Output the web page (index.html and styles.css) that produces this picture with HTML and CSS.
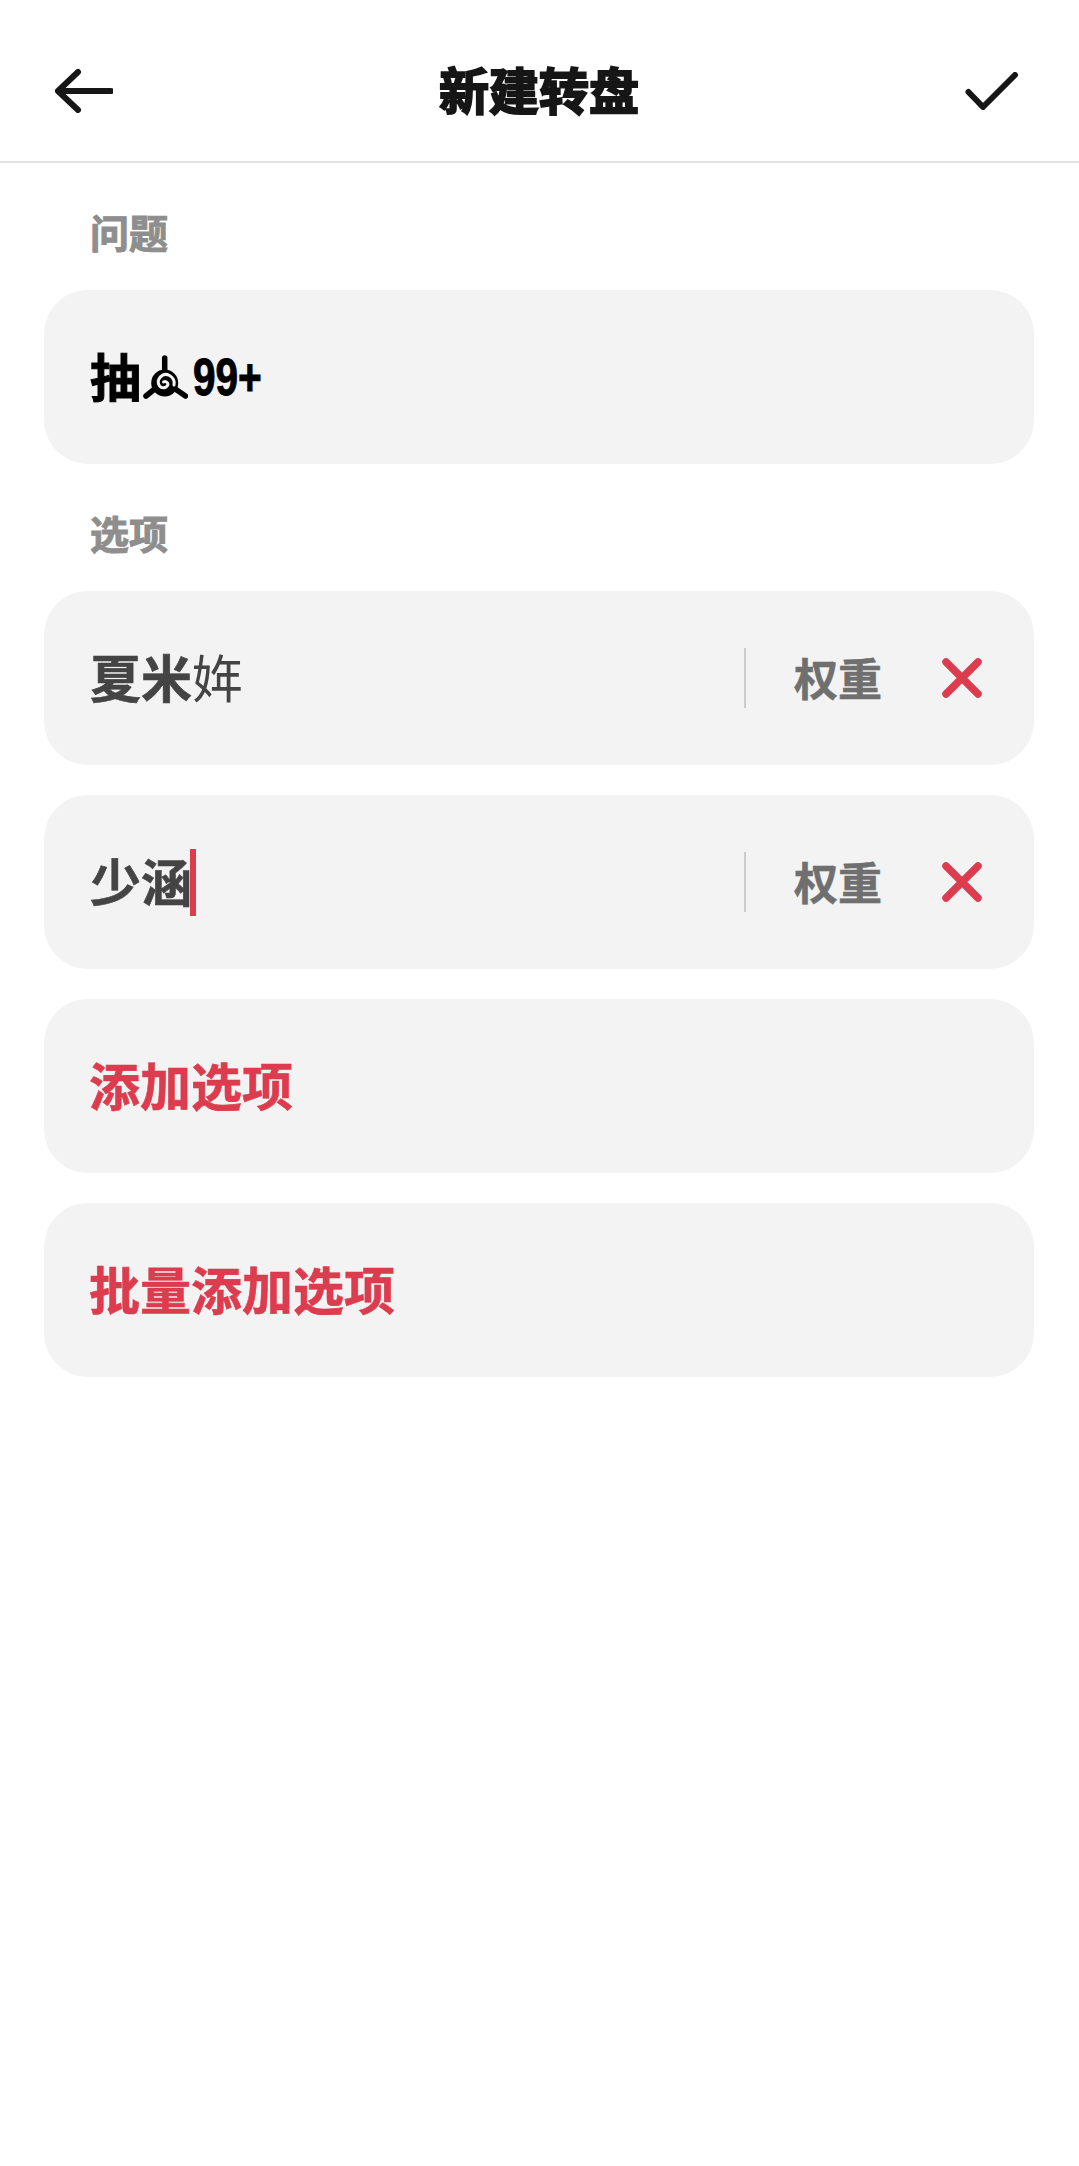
FILE: index.html
```html
<!DOCTYPE html>
<html lang="zh-CN">
<head>
    <meta charset="UTF-8">
    <meta name="viewport" content="width=device-width, initial-scale=1.0">
    <title>新建转盘</title>
    <link rel="stylesheet" href="styles.css">
</head>
<body>
    <header class="topbar">
        <svg class="back-icon" viewBox="0 0 58 44" aria-hidden="true">
            <path d="M23 3 L3 22 L23 41 M3 22 H56"></path>
        </svg>
        <h1 class="title">新建转盘</h1>
        <svg class="done-icon" viewBox="0 0 54 38" aria-hidden="true">
            <path d="M3.500 20 L18 35 L50 3"></path>
        </svg>
    </header>

    <main class="form">
        <div class="label">问题</div>
        <div class="card">
            <span class="question"><span class="text-up">抽</span><svg class="spiral" viewBox="0 0 45 45" aria-hidden="true">
                <path class="arms" d="M21.700 3 V18 M3 41 L11 34.500 M42.500 41 L33 34.500"></path>
                <circle class="hub" cx="21.700" cy="28" r="13.500"></circle>
                <path class="swirl" d="M20.500 27 A3 3 0 0 1 25 29.500 A5 5 0 0 1 16.500 31 A7.500 7.500 0 0 1 26.500 20.500 A9 9 0 0 1 31 30"></path>
            </svg><span class="count">99+</span></span>
        </div>

        <div class="label">选项</div>
        <div class="option-list">
            <div class="card">
                <span class="option-name">夏米<span class="thin">姩</span></span>
                <span class="divider"></span>
                <span class="weight">权重</span>
                <svg class="remove" viewBox="0 0 40 40" aria-hidden="true"><path d="M4 4 L36 36 M36 4 L4 36"></path></svg>
            </div>
            <div class="card">
                <span class="option-name">少涵<span class="caret"></span></span>
                <span class="divider"></span>
                <span class="weight">权重</span>
                <svg class="remove" viewBox="0 0 40 40" aria-hidden="true"><path d="M4 4 L36 36 M36 4 L4 36"></path></svg>
            </div>
            <div class="card action">添加选项</div>
            <div class="card action">批量添加选项</div>
        </div>
    </main>
</body>
</html>
```

FILE: styles.css
```css
/* General */
* {
    margin: 0;
    padding: 0;
    box-sizing: border-box;
    font-family: "Noto Sans CJK SC", "Noto Sans", sans-serif;
}

body {
    background-color: #fff;
}

/* Top bar */
.topbar {
    height: 163px;
    display: flex;
    align-items: center;
    justify-content: space-between;
    padding: 21px 60px 0 55px;
    border-bottom: 2px solid #e2e2e2;
}

.title {
    margin-bottom: 7px;
    font-size: 50px;
    font-weight: 700;
    line-height: 60px;
    color: #161616;
    -webkit-text-stroke: 2px #161616;
}

.back-icon {
    width: 58px;
    height: 44px;
}

.done-icon {
    width: 54px;
    height: 38px;
}

.back-icon path,
.done-icon path {
    fill: none;
    stroke: #161616;
    stroke-width: 6px;
    stroke-linecap: round;
    stroke-linejoin: round;
}

/* Form */
.form {
    padding: 0 45px 0 44px;
}

.label {
    height: 127px;
    padding: 48px 0 0 46px;
    font-size: 39px;
    line-height: 40px;
    font-weight: 700;
    color: #8e8e8e;
    -webkit-text-stroke: 1px #8e8e8e;
}

.option-list {
    display: flex;
    flex-direction: column;
    gap: 30px;
}

.card {
    height: 174px;
    display: flex;
    align-items: center;
    padding: 0 52px 0 46px;
    background-color: #f3f3f3;
    border-radius: 44px;
}

/* Question row */
.question {
    display: flex;
    align-items: center;
    font-size: 51px;
    font-weight: 700;
    color: #000;
    -webkit-text-stroke: 1px #000;
}

.text-up {
    margin-bottom: 5px;
}

.spiral {
    width: 45px;
    height: 45px;
    margin: 0 5px 0 2px;
}

.arms {
    fill: none;
    stroke: #000;
    stroke-width: 5.500px;
    stroke-linecap: round;
}

.hub {
    fill: #000;
}

.swirl {
    fill: none;
    stroke: #f3f3f3;
    stroke-width: 3px;
    stroke-linecap: round;
}

.count {
    width: 70px;
    margin-bottom: 1px;
    font-family: "Liberation Sans", sans-serif;
    font-size: 52px;
    font-weight: 700;
    transform: scaleX(0.78);
    transform-origin: left center;
}

/* Option rows */
.option-name {
    flex: 1;
    display: flex;
    align-items: center;
    margin-bottom: 5px;
    font-size: 51px;
    font-weight: 700;
    color: #444;
    -webkit-text-stroke: 0.6px #444;
}

.thin {
    font-weight: 400;
    -webkit-text-stroke: 0;
}

.caret {
    width: 6px;
    height: 67px;
    margin: 5px 0 0 -2px;
    background-color: #dc3c4e;
}

.divider {
    width: 2px;
    height: 60px;
    background-color: #ccc;
}

.weight {
    margin: 0 60px 3px 48px;
    font-size: 44px;
    font-weight: 700;
    color: #6f6f6f;
    -webkit-text-stroke: 0.5px #6f6f6f;
}

.remove {
    width: 40px;
    height: 40px;
}

.remove path {
    fill: none;
    stroke: #dc3c4e;
    stroke-width: 7.500px;
    stroke-linecap: round;
}

/* Red action rows */
.action {
    padding: 0 52px 5px 45px;
    font-size: 51px;
    font-weight: 700;
    color: #dc3c4e;
    -webkit-text-stroke: 0.6px #dc3c4e;
}
```
